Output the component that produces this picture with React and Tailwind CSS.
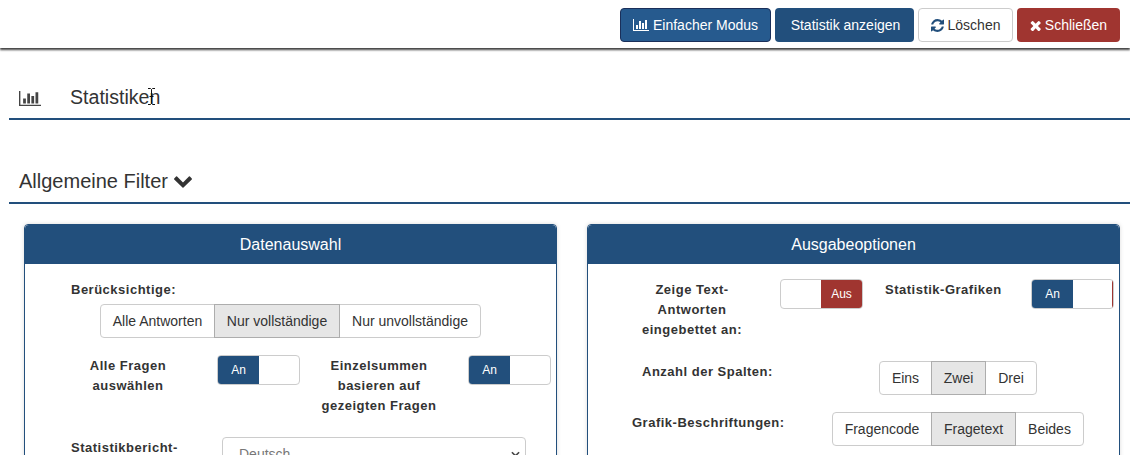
import React from 'react';

const BarIcon = ({ className }) => (
  <svg viewBox="0 128 2048 1536" preserveAspectRatio="none" className={className} fill="currentColor">
    <path d="M640 896v512h-256v-512h256zm384-512v1024h-256v-1024h256zm1024 1152v128h-2048v-1536h128v1408h1920zm-640-896v768h-256v-768h256zm384-384v1152h-256v-1152h256z" />
  </svg>
);

const ChevronIcon = ({ className }) => (
  <svg viewBox="90 500 1612 1090" preserveAspectRatio="none" className={className} fill="currentColor">
    <path d="M1683 808l-742 741q-19 19-45 19t-45-19l-742-741q-19-19-19-45.500t19-45.500l166-165q19-19 45-19t45 19l531 531 531-531q19-19 45-19t45 19l166 165q19 19 19 45.500t-19 45.500z" />
  </svg>
);

const RefreshIcon = ({ className }) => (
  <svg viewBox="128 128 1536 1536" className={className} fill="currentColor">
    <path d="M1639 1056q0 5-1 7-64 268-268 434.500t-478 166.500q-146 0-282.500-55t-243.500-157l-129 129q-19 19-45 19t-45-19-19-45v-448q0-26 19-45t45-19h448q26 0 45 19t19 45-19 45l-137 137q71 66 161 102t187 36q134 0 250-65t186-179q11-17 53-117 8-23 30-23h192q13 0 22.500 9.500t9.500 22.500zm25-800v448q0 26-19 45t-45 19h-448q-26 0-45-19t-19-45 19-45l138-138q-148-137-349-137-134 0-250 65t-186 179q-11 17-53 117-8 23-30 23h-199q-13 0-22.500-9.500t-9.500-22.500v-7q65-268 270-434.500t480-166.500q146 0 284 55.500t245 156.500l130-129q19-19 45-19t45 19 19 45z" />
  </svg>
);

const TimesIcon = ({ className }) => (
  <svg viewBox="250 250 1250 1290" className={className} fill="currentColor">
    <path d="M1490 1322q0 40-28 68l-136 136q-28 28-68 28t-68-28l-294-294-294 294q-28 28-68 28t-68-28l-136-136q-28-28-28-68t28-68l294-294-294-294q-28-28-28-68t28-68l136-136q28-28 68-28t68 28l294 294 294-294q28-28 68-28t68 28l136 136q28 28 28 68t-28 68l-294 294 294 294q28 28 28 68z" />
  </svg>
);

const BtnGroup = ({ items, active }) => (
  <div className="flex h-[34px] text-[14px] text-[#333]">
    {items.map((item, i) => (
      <div
        key={item.label}
        style={{ width: item.w }}
        className={
          'flex items-center justify-center border ' +
          (i > 0 ? '-ml-px ' : '') +
          (i === 0 ? 'rounded-l ' : '') +
          (i === items.length - 1 ? 'rounded-r ' : '') +
          (i === active ? 'z-10 border-[#adadad] bg-[#e6e6e6]' : 'border-[#ccc] bg-white')
        }
      >
        {item.label}
      </div>
    ))}
  </div>
);

const ToggleOn = ({ sliver }) => (
  <div className="flex h-[30px] w-[83px] overflow-hidden rounded border border-[#ccc] bg-white text-[12px] text-white">
    <div className="flex w-[41px] items-center justify-center bg-[#224f7c]">An</div>
    <div className="flex-1" />
    {sliver && <div className="w-px bg-[#a03530]" />}
  </div>
);

const ToggleOff = () => (
  <div className="flex h-[30px] w-[83px] overflow-hidden rounded border border-[#ccc] bg-white text-[12px] text-white">
    <div className="flex-1" />
    <div className="flex w-[41px] items-center justify-center bg-[#a03530]">Aus</div>
  </div>
);

const Label = ({ className, children }) => (
  <div className={'pt-px text-[13px] font-bold leading-5 tracking-[0.5px] text-[#333] ' + className}>{children}</div>
);

const Panel = ({ title, children }) => (
  <div className="w-[533px] rounded-t border border-[#224f7c] shadow-[0_0_4px_rgba(0,0,0,0.15)]">
    <div className="flex h-[39px] items-center justify-center rounded-t-sm bg-[#224f7c] text-[16px] text-white">{title}</div>
    <div className="h-[300px] bg-white">{children}</div>
  </div>
);

export default function App() {
  return (
    <div className="h-[455px] w-[1130px] overflow-hidden bg-white font-['Liberation_Sans',Arial,sans-serif] text-[#333]">
      <div className="relative z-10 flex h-[48px] items-start justify-end gap-1 pr-[10px] pt-2 shadow-[0_2px_2px_rgba(0,0,0,0.75)]">
        <button className="flex h-[34px] w-[151px] items-center justify-center gap-1 rounded border border-[#1a2f5a] bg-[#265a8e] text-[14px] text-white">
          <BarIcon className="h-[12px] w-[16px]" />
          Einfacher Modus
        </button>
        <button className="h-[34px] w-[139px] rounded bg-[#224f7c] pl-[2px] text-[14px] text-white">Statistik anzeigen</button>
        <button className="flex h-[34px] w-[95px] items-center justify-center gap-1 rounded border border-[#ccc] bg-white text-[14px] text-[#333]">
          <RefreshIcon className="h-[13px] w-[13px] text-[#224f7c]" />
          Löschen
        </button>
        <button className="flex h-[34px] w-[103px] items-center justify-center gap-1 rounded bg-[#a03530] text-[14px] text-white">
          <TimesIcon className="h-[11px] w-[11px]" />
          Schließen
        </button>
      </div>

      <div className="ml-[9px] mt-[24px] flex h-[48px] items-center border-b-2 border-[#224f7c] pt-[6px]">
        <BarIcon className="ml-[10px] h-[15px] w-[22px] text-[#444]" />
        <div className="relative ml-[29px] text-[19.6px]">
          Statistiken
          <svg viewBox="0 0 9 17" className="absolute right-[4px] top-[5px] h-[17px] w-[9px]" fill="none" stroke="#111" strokeWidth="1">
            <path d="M1 .5h2.500L4.500 1.500 5.500 .5H8M4.500 1.500v14M1 16.500h2.500L4.500 15.500 5.500 16.500H8M2.500 8.500h4" />
          </svg>
        </div>
      </div>

      <div className="ml-[9px] mt-[40px] flex h-[44px] items-center gap-[6px] border-b-2 border-[#224f7c] pb-[1px] pl-[10px] text-[20px]">
        Allgemeine Filter
        <ChevronIcon className="mt-[3px] h-[12px] w-[18px] text-[#333]" />
      </div>

      <div className="ml-[24px] mt-[20px] flex gap-[30px]">
        <Panel title="Datenauswahl">
          <div className="pt-[15px]">
            <Label className="ml-[46px]">Berücksichtige:</Label>
            <div className="ml-[75px] mt-[4px]">
              <BtnGroup
                active={1}
                items={[
                  { label: 'Alle Antworten', w: 115 },
                  { label: 'Nur vollständige', w: 126 },
                  { label: 'Nur unvollständige', w: 142 },
                ]}
              />
            </div>
            <div className="mt-[17px] flex items-start">
              <Label className="ml-[38px] w-[130px] text-center">Alle Fragen<br />auswählen</Label>
              <div className="ml-[24px]"><ToggleOn /></div>
              <Label className="ml-[14px] w-[130px] text-center">Einzelsummen<br />basieren auf<br />gezeigten Fragen</Label>
              <div className="ml-[24px]"><ToggleOn /></div>
            </div>
            <div className="mt-[21px] flex items-start">
              <Label className="ml-[46px] w-[151px]">Statistikbericht-</Label>
              <div className="relative h-[34px] w-[304px] rounded border border-[#ccc] pl-4 pt-[6px] text-[14px] text-[#777]">
                Deutsch
                <svg viewBox="0 0 10 6" className="absolute right-[5px] top-[13px] h-[6px] w-[9px]" fill="none" stroke="#444" strokeWidth="1.800">
                  <path d="M1 1l4 4 4-4" />
                </svg>
              </div>
            </div>
          </div>
        </Panel>
        <Panel title="Ausgabeoptionen">
          <div className="pt-[15px]">
            <div className="flex h-[67px] items-start">
              <Label className="ml-[39px] w-[130px] text-center">Zeige Text-<br />Antworten<br />eingebettet an:</Label>
              <div className="ml-[23px]"><ToggleOff /></div>
              <Label className="ml-[22px] w-[146px]">Statistik-Grafiken</Label>
              <ToggleOn sliver />
            </div>
            <div className="mt-[15px] flex items-start">
              <Label className="ml-[54px] w-[237px]">Anzahl der Spalten:</Label>
              <BtnGroup
                active={1}
                items={[
                  { label: 'Eins', w: 53 },
                  { label: 'Zwei', w: 55 },
                  { label: 'Drei', w: 52 },
                ]}
              />
            </div>
            <div className="mt-[17px] flex items-start">
              <Label className="ml-[44px] w-[200px]">Grafik-Beschriftungen:</Label>
              <BtnGroup
                active={1}
                items={[
                  { label: 'Fragencode', w: 100 },
                  { label: 'Fragetext', w: 85 },
                  { label: 'Beides', w: 69 },
                ]}
              />
            </div>
          </div>
        </Panel>
      </div>
    </div>
  );
}
